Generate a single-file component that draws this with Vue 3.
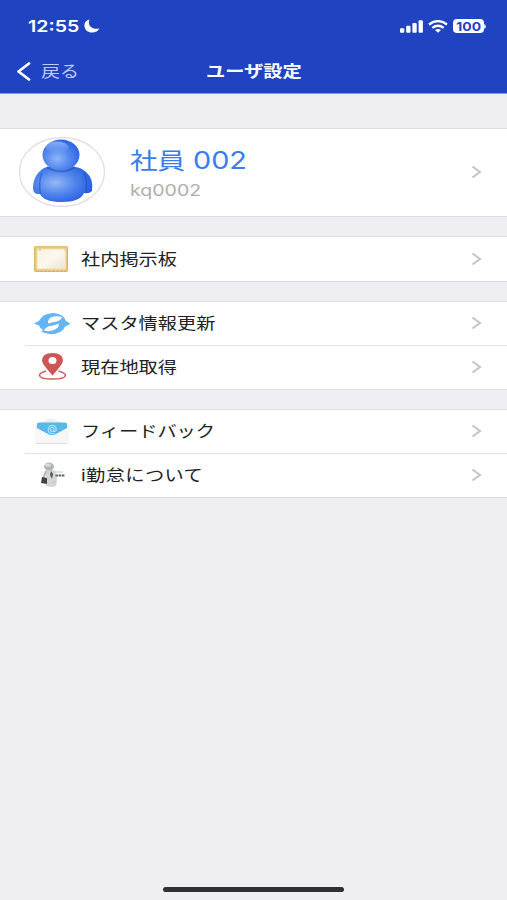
<script setup>
const groups = [
  [{ icon: 'board', label: '社内掲示板' }],
  [{ icon: 'sync', label: 'マスタ情報更新' }, { icon: 'pin', label: '現在地取得' }],
  [{ icon: 'mail', label: 'フィードバック' }, { icon: 'about', label: 'i勤怠について' }],
]
</script>

<template>
  <main class="screen">
    <header class="header">
      <div class="status">
        <span class="time wide">12:55</span>
        <svg class="moon" viewBox="0 0 16 14"><path d="M5.400.4C1.800 1.400 0 4 .5 7.500c.5 3.700 3.500 6 7.500 6 3.500 0 6.300-1.500 7.500-4.300C12.500 10.200 9 9.800 7 8 4.700 6 4.300 3 5.400.4Z" fill="#fff" /></svg>
        <svg class="signal" viewBox="0 0 24 13" fill="#fff">
          <rect x="0" y="8.200" width="4.300" height="4.500" rx="1" /><rect x="6.200" y="5.700" width="4.300" height="7" rx="1" />
          <rect x="12.400" y="3" width="4.300" height="9.700" rx="1" /><rect x="18.600" y=".3" width="4.300" height="12.400" rx="1" />
        </svg>
        <svg class="wifi" viewBox="0 0 20 13" fill="none" stroke="#fff" stroke-width="2.300">
          <path d="M1 4.500Q10-2.300 19 4.500M4.300 7.900Q10 3.500 15.700 7.900" /><path d="M7 10Q10 8 13 10L10 12.700Z" fill="#fff" stroke="none" />
        </svg>
        <div class="battery"><span>100</span></div>
        <svg class="nub" viewBox="0 0 2 5"><path d="M0 0Q2 .8 2 2.500T0 5Z" fill="#dce4ff" /></svg>
      </div>
      <nav class="nav">
        <button class="back">
          <svg viewBox="0 0 14 19" fill="none" stroke="#fff" stroke-width="2.700" stroke-linecap="round" stroke-linejoin="round"><path d="M12 1.500 1.500 9.500l10.500 8" /></svg>
          <span class="wide">戻る</span>
        </button>
        <h1><span>ユーザ設定</span></h1>
      </nav>
    </header>

    <section class="profile">
      <svg class="avatar" viewBox="0 0 88 72">
        <defs>
          <radialGradient id="head" cx=".4" cy=".62" r=".62"><stop stop-color="#8fb6f9" /><stop offset=".55" stop-color="#5387f0" /><stop offset="1" stop-color="#2f66e4" /></radialGradient>
          <radialGradient id="body" cx=".38" cy=".45" r=".62"><stop stop-color="#94b8f6" /><stop offset=".55" stop-color="#4f83ec" /><stop offset="1" stop-color="#2860e0" /></radialGradient>
          <linearGradient id="shine" x2="0" y2="1"><stop stop-color="#c3dafc" stop-opacity=".6" /><stop offset="1" stop-color="#8eb7ff" stop-opacity="0" /></linearGradient>
        </defs>
        <ellipse cx="44" cy="36" rx="42.500" ry="34.500" fill="#fff" stroke="#dedfe1" stroke-width="1.300" />
        <path d="M29 31C21 33 15 42 15 52Q15 57 19 58L22 58Q26 66 44 66 62 66 66 57Q71 58 74 55 76 43 68 36 63 31.500 57 31Z" fill="url(#body)" />
        <path d="M24 37Q20 47 22.500 58M66 37Q70 46 67.500 57" fill="none" stroke="#1c4ac0" stroke-opacity=".5" stroke-width="1.500" />
        <path d="M29 31q14 8 28 0" fill="none" stroke="#214ba9" stroke-width="2.500" stroke-opacity=".5" />
        <ellipse cx="43" cy="19" rx="18.500" ry="15.500" fill="url(#head)" />
        <ellipse cx="39" cy="11.500" rx="11.500" ry="6" fill="url(#shine)" />
      </svg>
      <div class="identity">
        <div class="name"><span class="kanji">社員</span><span class="number">002</span></div>
        <div class="account wide">kq0002</div>
      </div>
      <svg class="arrow" viewBox="0 0 11 14"><path d="m1.500 1.500 7.500 5.500-7.500 5.500" /></svg>
    </section>

    <section v-for="(rows, index) in groups" :key="index" class="group">
      <div v-for="row in rows" :key="row.icon" class="row">
        <svg class="icon" viewBox="0 0 38 30">
          <g v-if="row.icon === 'board'">
            <defs><linearGradient id="paper" x2="1" y2="1"><stop stop-color="#f8efdf" /><stop offset=".5" stop-color="#fcf7ee" /><stop offset="1" stop-color="#eee2d0" /></linearGradient></defs>
            <rect x="1" y="2" width="34" height="26" rx="1" fill="#e6c67c" /><path d="M4 5h28.500v20H4Z" fill="url(#paper)" stroke="#f4dfad" />
            <path d="M1.500 4v22M34.500 4v22M3 27.500h31" stroke="#d0ab5b" stroke-width=".8" stroke-dasharray="3 1" /><path d="M6 6h2M31 6h1" stroke="#b8a16c" stroke-width=".8" />
          </g>
          <g v-else-if="row.icon === 'sync'">
            <path d="M1 15.500 6.500 12.500Q8.500 8 13 6.500 20 3.500 27 6.500 31.500 8.500 32.500 12.500L37.500 16 32 18.500Q30.500 22.500 26 24.500 19 27.500 12 25L8.500 24 10 22Q7 20.500 6 17.500Z" fill="#64b5f6" />
            <path d="M15 15.500Q14.500 9.500 21 8.500 25 7.800 29 9 28 12 24 13.500 20 14 15 15.500ZM11 22.500Q13 18.500 17 18 21 17.500 26 15.500 26 20 21 22 16 24 11 22.500Z" fill="#fff" />
          </g>
          <g v-else-if="row.icon === 'pin'">
            <path d="M13 19q-7 2-6.500 4.500.5 3.500 13 3.500t13-3.500q0-2.500-7-4.500" fill="none" stroke="#cf5c59" stroke-width="1.600" />
            <path fill-rule="evenodd" d="M19.500 23.500Q9 12 9 8.500 9 1 19.500 1T30 8.500Q30 12 19.500 23.500Zm0-18.500a4 3.500 0 1 0 0 7 4 3.500 0 0 0 0-7Z" fill="#cf5555" />
          </g>
          <g v-else-if="row.icon === 'mail'">
            <path d="m2 9.500 13-6q3-1 6 0l15 6v16.500q0 2-2 2H4q-2 0-2-2Z" fill="#ededee" />
            <path d="M1.500 11.500 18 19l18-7.500v14q0 2-2 2H4q-2 0-2-2Z" fill="#f7f7f8" />
            <path d="M4 8q0-1.500 2-1.500h26q2 0 2 1.500v4L24 17.500Q19 20.500 14 17.500L4 12Z" fill="#56b9ea" />
            <text x="19" y="15.500" class="at">@</text>
            <path d="M3 27.500h31" stroke="#dcdddf" stroke-width="1.200" />
          </g>
          <g v-else>
            <path d="m13 10 5-1 4 2 2 8-1 7-4 1-6-1Z" fill="#d4d5d5" /><path d="M13 11q-2 5-3 9" fill="none" stroke="#b1b3b4" stroke-width="2" />
            <ellipse cx="16" cy="6.500" rx="5" ry="4" fill="#b0b2b3" /><ellipse cx="15" cy="5" rx="3" ry="1.800" fill="#d8dada" />
            <path d="m18 11 2 3-1 5-2-4Z" fill="#555" /><path d="m9 17 5 1v6l-6-1Z" fill="#414446" />
            <path d="M21 12h9M19 22h5" stroke="#c3c5c6" stroke-width="1" /><path d="M22.500 15.500h9.500" stroke="#606264" stroke-width="2" stroke-dasharray="2.500 .6" />
          </g>
        </svg>
        <span class="label wide" :class="row.icon">{{ row.label }}</span>
        <svg class="arrow" viewBox="0 0 11 14"><path d="m1.500 1.500 7.500 5.500-7.500 5.500" /></svg>
      </div>
    </section>
    <div class="home"></div>
  </main>
</template>

<style>
body { margin: 0; background: #efeef3; }
</style>
<style scoped>
* { box-sizing: border-box; }
.screen { width: 507px; height: 900px; display: flex; flex-direction: column; background: #efeef3; font-family: Inter, "Noto Sans CJK JP", sans-serif; overflow: hidden; }
.wide { display: inline-block; transform: scaleX(1.2); transform-origin: left center; white-space: nowrap; }
.header { height: 94px; flex: none; background: #2043c1; border-bottom: 1px solid #8296df; color: #fff; }
.status { height: 51px; padding: 1px 21px 0 28px; display: flex; align-items: center; }
.time { width: 56px; font-size: 16.300px; font-weight: 600; line-height: 20px; }
.moon { width: 16px; height: 14px; }
.signal { width: 24px; height: 13px; margin-left: auto; }
.wifi { width: 20px; height: 13px; margin-left: 4px; }
.battery { width: 31px; height: 14px; margin-left: 5px; border-radius: 4px; background: #fff; color: #2043c1; display: flex; align-items: center; justify-content: center; font-size: 12px; font-weight: 700; }
.battery span { transform: scaleX(1.16); }
.nub { width: 2px; height: 5px; }
.nav { height: 41px; display: grid; grid-template-columns: 120px 267px 120px; align-items: center; }
.back { padding: 0 0 0 17px; display: flex; align-items: center; gap: 10px; border: 0; background: transparent; color: #bdcaff; font-family: inherit; font-size: 15.800px; line-height: 24px; }
.back svg { width: 14px; height: 19px; }
h1 { margin: 0; padding-bottom: 2px; font-size: 16px; font-weight: 600; line-height: 24px; text-align: center; }
h1 span { display: inline-block; transform: scaleX(1.2); }
.profile { height: 89px; margin-top: 34px; flex: none; display: flex; align-items: center; padding: 0 25px 1px 18px; background: #fff; border-top: 1px solid #dedee2; border-bottom: 1px solid #dedee2; }
.avatar { width: 88px; height: 72px; }
.identity { margin-left: 24px; padding-top: 4px; display: flex; flex-direction: column; }
.name { height: 32px; display: flex; align-items: center; color: #3a7ced; font-size: 23px; line-height: 32px; }
.kanji, .number { display: block; transform: scaleX(1.2); transform-origin: left; }
.kanji { width: 63px; }
.number { font-size: 24px; }
.account { color: #aeaeae; font-size: 16.300px; line-height: 26px; }
.arrow { width: 11px; height: 14px; margin-left: auto; fill: none; stroke: #c3c3c6; stroke-width: 2; }
.group { margin-top: 19px; flex: none; background: #fff; border-top: 1px solid #dedee2; border-bottom: 1px solid #dedee2; }
.row { height: 43.500px; padding: 0 25px 0 33px; display: flex; align-items: center; }
.row + .row { background: linear-gradient(#e3e3e6, #e3e3e6) 25px 0 / 100% 1px no-repeat; }
.icon { width: 38px; height: 30px; }
.label { margin-left: 10px; font-size: 16px; line-height: 24px; color: #222; }
.label.about { letter-spacing: .35px; }
.at { font: 10px Inter, sans-serif; fill: #c9edfc; text-anchor: middle; }
.home { width: 181px; height: 5px; margin: auto auto 8px; border-radius: 3px; background: #303033; }
</style>
